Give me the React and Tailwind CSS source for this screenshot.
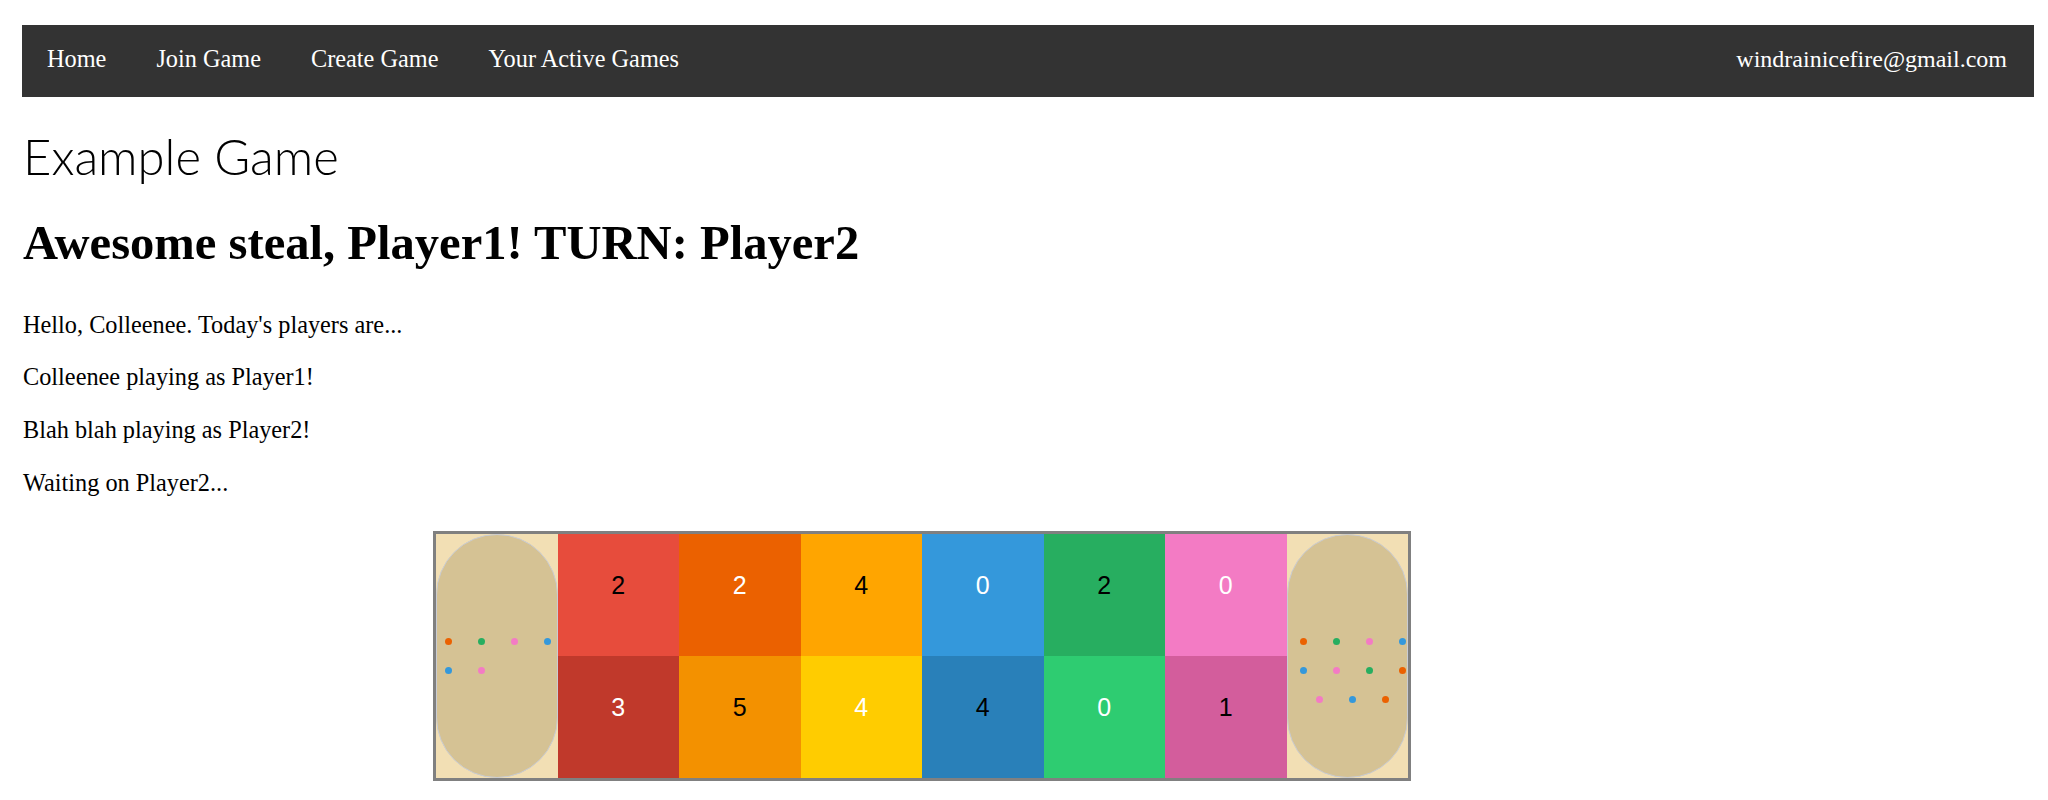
import React from 'react';

const links = ['Home', 'Join Game', 'Create Game', 'Your Active Games'];

const topRow = [
  { n: 2, bg: 'bg-[#e74c3c]', fg: 'text-black' },
  { n: 2, bg: 'bg-[#eb6100]', fg: 'text-white' },
  { n: 4, bg: 'bg-[#ffa500]', fg: 'text-black' },
  { n: 0, bg: 'bg-[#3498db]', fg: 'text-white' },
  { n: 2, bg: 'bg-[#27ae60]', fg: 'text-black' },
  { n: 0, bg: 'bg-[#f37bc4]', fg: 'text-white' },
];

const bottomRow = [
  { n: 3, bg: 'bg-[#c0392b]', fg: 'text-white' },
  { n: 5, bg: 'bg-[#f39100]', fg: 'text-black' },
  { n: 4, bg: 'bg-[#ffcc00]', fg: 'text-white' },
  { n: 4, bg: 'bg-[#2980b9]', fg: 'text-black' },
  { n: 0, bg: 'bg-[#2ecc71]', fg: 'text-white' },
  { n: 1, bg: 'bg-[#d35d9c]', fg: 'text-black' },
];

const dotColor = {
  o: 'bg-[#eb6100]',
  g: 'bg-[#27ae60]',
  p: 'bg-[#f37bc4]',
  b: 'bg-[#3498db]',
};

// each row: [padding-left class, dots]
const leftStore = [
  ['pl-[8px]', ['o', 'g', 'p', 'b']],
  ['pl-[8px]', ['b', 'p']],
];

const rightStore = [
  ['pl-[12px]', ['o', 'g', 'p', 'b']],
  ['pl-[12px]', ['b', 'p', 'g', 'o']],
  ['pl-[28px]', ['p', 'b', 'o']],
];

const Store = ({ rows }) => (
  <div className="row-span-2 bg-[#f2dfb4]">
    <div className="h-full w-full rounded-full bg-[#d5c294] border border-[#c9ccd3] pt-[103px] flex flex-col gap-[22px]">
      {rows.map(([pad, dots], i) => (
        <div key={i} className={`flex gap-[26px] ${pad}`}>
          {dots.map((d, j) => (
            <span key={j} className={`block w-[7px] h-[7px] rounded-full ${dotColor[d]}`} />
          ))}
        </div>
      ))}
    </div>
  </div>
);

const Pit = ({ n, bg, fg }) => (
  <div className={`${bg} ${fg} text-center pt-[39px] text-[25px] leading-none font-['Liberation_Sans',Arial,sans-serif]`}>
    {n}
  </div>
);

const App = () => {
  return (
    <div className="min-h-screen bg-white text-black font-['Liberation_Serif','Times_New_Roman',serif] text-[24.3px]">
      <nav className="mt-[25px] ml-[22px] mr-[14px] h-[72px] bg-[#333333] text-white flex items-center justify-between pb-[4px]">
        <div className="flex items-center">
          {links.map((l) => (
            <a key={l} className="px-[25px] leading-none whitespace-nowrap">{l}</a>
          ))}
        </div>
        <span className="px-[27px] leading-none text-[24px]">windrainicefire@gmail.com</span>
      </nav>

      <div className="pl-[23px]">
        <div className="mt-[35px] text-[49px] leading-none font-light font-['Lato',sans-serif]">Example Game</div>

        <h1 className="mt-[38px] text-[48.6px] font-bold leading-none">Awesome steal, Player1! TURN: Player2</h1>

        <div className="mt-[45px] flex flex-col gap-[28.5px] leading-none">
          <p>Hello, Colleenee. Today's players are...</p>
          <p>Colleenee playing as Player1!</p>
          <p>Blah blah playing as Player2!</p>
          <p>Waiting on Player2...</p>
        </div>

        <div className="mt-[36px] ml-[410px] w-fit border-[3px] border-[#808080]">
          <div className="grid grid-cols-[repeat(8,121.5px)] grid-rows-[repeat(2,122px)]">
            <Store rows={leftStore} />
            {topRow.map((c, i) => <Pit key={'t' + i} {...c} />)}
            <Store rows={rightStore} />
            {bottomRow.map((c, i) => <Pit key={'b' + i} {...c} />)}
          </div>
        </div>
      </div>
    </div>
  );
};

export default App;
